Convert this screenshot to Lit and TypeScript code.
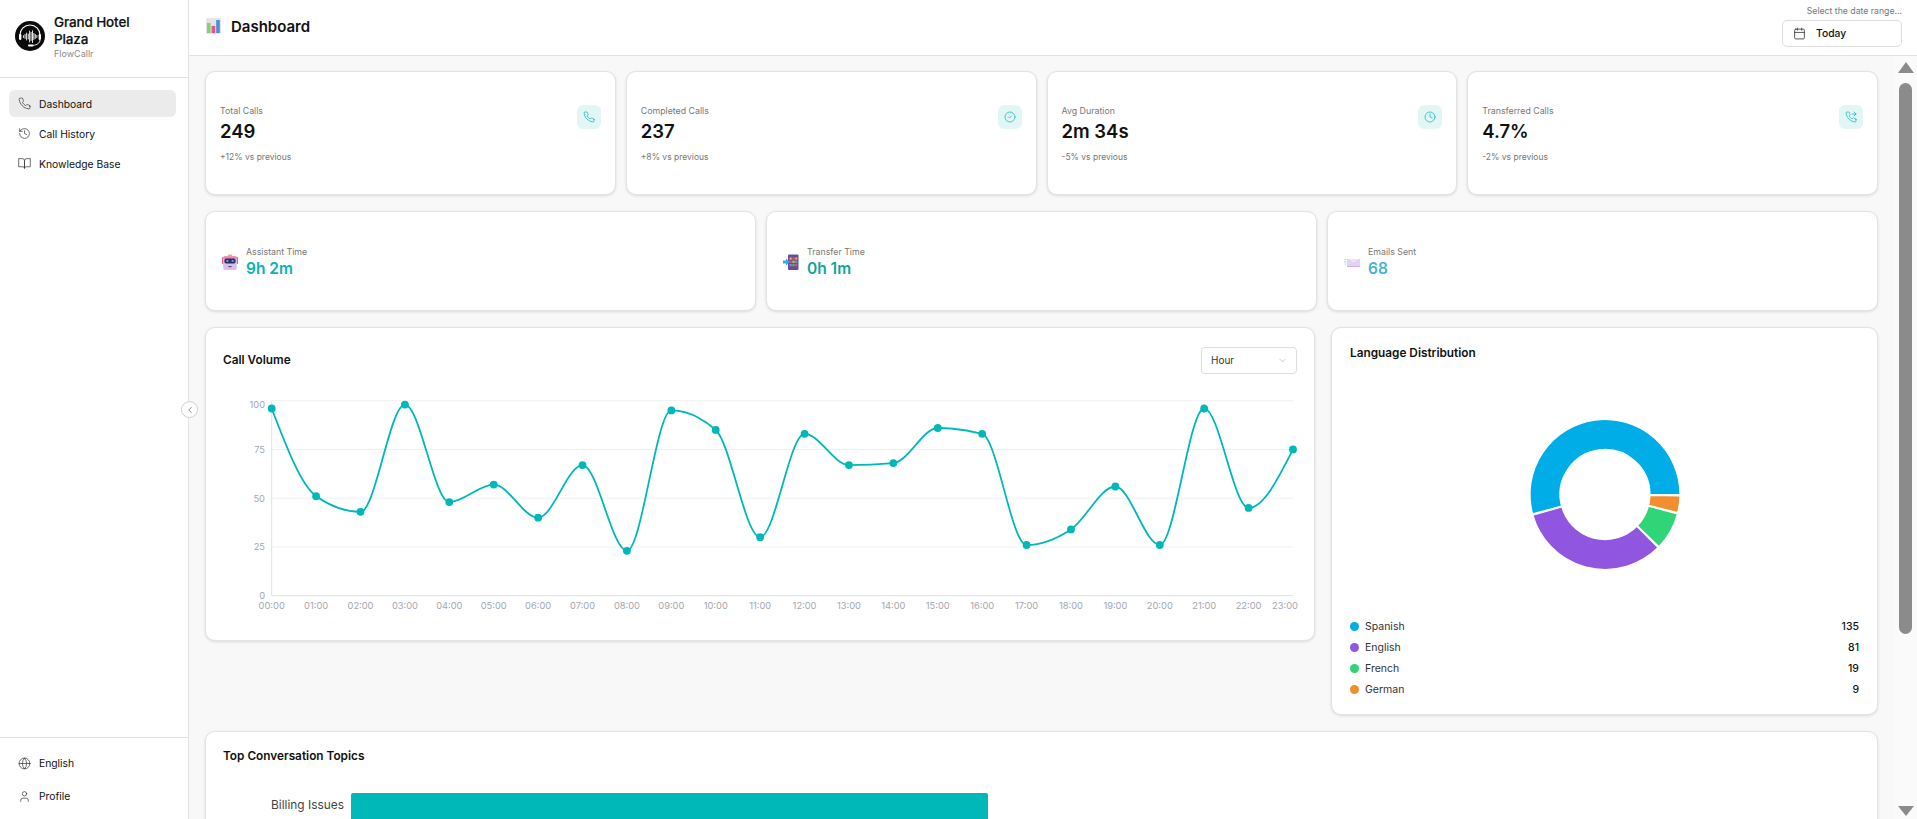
import { LitElement, html, css, svg } from "lit";
import { customElement } from "lit/decorators.js";

const PHONE = "M22 16.92v3a2 2 0 0 1-2.18 2 19.79 19.79 0 0 1-8.63-3.07 19.5 19.5 0 0 1-6-6 19.79 19.79 0 0 1-3.07-8.67A2 2 0 0 1 4.11 2h3a2 2 0 0 1 2 1.72 12.84 12.84 0 0 0 .7 2.81 2 2 0 0 1-.45 2.11L8.09 9.91a16 16 0 0 0 6 6l1.27-1.27a2 2 0 0 1 2.11-.45 12.84 12.84 0 0 0 2.81.7A2 2 0 0 1 22 16.92z";

const ICONS: Record<string, any> = {
  phone: svg`<path d=${PHONE} />`,
  history: svg`<path d="M3 12a9 9 0 1 0 9-9 9.75 9.75 0 0 0-6.74 2.74L3 8"/><path d="M3 3v5h5"/><path d="M12 7v5l4 2"/>`,
  book: svg`<path d="M2 3h6a4 4 0 0 1 4 4v14a3 3 0 0 0-3-3H2z"/><path d="M22 3h-6a4 4 0 0 0-4 4v14a3 3 0 0 1 3-3h7z"/>`,
  globe: svg`<circle cx="12" cy="12" r="10"/><path d="M12 2a14.5 14.5 0 0 0 0 20 14.5 14.5 0 0 0 0-20"/><path d="M2 12h20"/>`,
  user: svg`<path d="M19 21v-2a4 4 0 0 0-4-4H9a4 4 0 0 0-4 4v2"/><circle cx="12" cy="7" r="4"/>`,
  calendar: svg`<path d="M8 2v4"/><path d="M16 2v4"/><rect x="3" y="4" width="18" height="18" rx="2"/><path d="M3 10h18"/>`,
  forwarded: svg`<polyline points="18 2 22 6 18 10"/><line x1="14" y1="6" x2="22" y2="6"/><path d=${PHONE} />`,
  clock: svg`<circle cx="12" cy="12" r="10"/><polyline points="12 6 12 12 16 14"/>`,
  check: svg`<circle cx="12" cy="12" r="10"/><path d="m9 12 2 2 4-4"/>`,
  left: svg`<path d="m15 18-6-6 6-6"/>`,
  down: svg`<path d="m6 9 6 6 6-6"/>`,
};

const icon = (name: string, cls = "") =>
  html`<svg class="ic ${cls}" viewBox="0 0 24 24" fill="none" stroke="currentColor" stroke-linecap="round" stroke-linejoin="round">${ICONS[name]}</svg>`;

const VALUES = [96, 51, 43, 98, 48, 57, 40, 67, 23, 95, 85, 30, 83, 67, 68, 86, 83, 26, 34, 56, 26, 96, 45, 75];
const PX0 = 48.7, PX1 = 1070, PY0 = 205.7, PH = 195;
const px = (i: number) => PX0 + (i * (PX1 - PX0)) / 23;
const py = (v: number) => PY0 - (v * PH) / 100;

function monotonePath(pts: [number, number][]): string {
  const n = pts.length;
  const dx: number[] = [], m: number[] = [], t: number[] = new Array(n).fill(0);
  for (let i = 0; i < n - 1; i++) {
    dx[i] = pts[i + 1][0] - pts[i][0];
    m[i] = (pts[i + 1][1] - pts[i][1]) / dx[i];
  }
  const sign = (v: number) => (v < 0 ? -1 : 1);
  for (let i = 1; i < n - 1; i++) {
    const p = (m[i - 1] * dx[i] + m[i] * dx[i - 1]) / (dx[i - 1] + dx[i]);
    t[i] = (sign(m[i - 1]) + sign(m[i])) * Math.min(Math.abs(m[i - 1]), Math.abs(m[i]), 0.5 * Math.abs(p)) || 0;
  }
  t[0] = (3 * m[0] - t[1]) / 2;
  t[n - 1] = (3 * m[n - 2] - t[n - 2]) / 2;
  let d = `M${pts[0][0]},${pts[0][1]}`;
  for (let i = 0; i < n - 1; i++) {
    const h = dx[i] / 3;
    d += `C${pts[i][0] + h},${pts[i][1] + h * t[i]} ${pts[i + 1][0] - h},${pts[i + 1][1] - h * t[i + 1]} ${pts[i + 1][0]},${pts[i + 1][1]}`;
  }
  return d;
}

function arc(cx: number, cy: number, ro: number, ri: number, a0: number, a1: number): string {
  const p = (r: number, a: number) => {
    const t = (a * Math.PI) / 180;
    return `${(cx + r * Math.cos(t)).toFixed(2)} ${(cy - r * Math.sin(t)).toFixed(2)}`;
  };
  const large = a1 - a0 > 180 ? 1 : 0;
  return `M${p(ro, a0)}A${ro} ${ro} 0 ${large} 0 ${p(ro, a1)}L${p(ri, a1)}A${ri} ${ri} 0 ${large} 1 ${p(ri, a0)}Z`;
}

const LANGS = [
  { name: "Spanish", v: 135, c: "#00ade6", a: [0, 195] },
  { name: "English", v: 81, c: "#9056df", a: [196, 315] },
  { name: "French", v: 19, c: "#2fd576", a: [316, 345] },
  { name: "German", v: 9, c: "#f08e30", a: [346, 359] },
];

const STATS = [
  { label: "Total Calls", value: "249", sub: "+12% vs previous", icon: "phone" },
  { label: "Completed Calls", value: "237", sub: "+8% vs previous", icon: "check" },
  { label: "Avg Duration", value: "2m 34s", sub: "-5% vs previous", icon: "clock" },
  { label: "Transferred Calls", value: "4.7%", sub: "-2% vs previous", icon: "forwarded" },
];

const robot = html`<svg class="emoji" viewBox="0 0 16 17">
  <rect x="6" y="0.5" width="4" height="2" rx="0.6" fill="#f2b544"/>
  <rect x="0" y="3" width="1.6" height="7" rx="0.6" fill="#ef5f95"/>
  <rect x="14.4" y="3" width="1.6" height="7" rx="0.6" fill="#ef5f95"/>
  <rect x="1.2" y="2.2" width="13.6" height="13.8" rx="2.6" fill="#d8bfe8"/>
  <rect x="1.2" y="2.2" width="13.6" height="3" rx="1.4" fill="#ee86ad"/>
  <rect x="2.4" y="4.6" width="11.2" height="5" rx="1.8" fill="#2c2f63"/>
  <rect x="4.4" y="6.2" width="2" height="1.6" fill="#7db6f0"/>
  <rect x="9.6" y="6.2" width="2" height="1.6" fill="#7db6f0"/>
  <rect x="6.4" y="12" width="3.2" height="1.2" fill="#55506f"/>
</svg>`;

const transfer = html`<svg class="emoji" viewBox="0 0 16 17">
  <rect x="5" y="0.5" width="10.5" height="15.5" rx="1" fill="#6a4c9c"/>
  <rect x="6.5" y="3.5" width="2.2" height="2.2" fill="#f0b13c"/>
  <rect x="9.4" y="3.5" width="2.2" height="2.2" fill="#e2574c"/>
  <rect x="12.2" y="3.5" width="2" height="2.2" fill="#f0b13c"/>
  <rect x="6.5" y="6.7" width="2.2" height="2.2" fill="#e2574c"/>
  <rect x="9.4" y="6.7" width="2.2" height="2.2" fill="#f0b13c"/>
  <rect x="12.2" y="6.7" width="2" height="2.2" fill="#4aa6e8"/>
  <rect x="6.5" y="10" width="2.2" height="2.2" fill="#4aa6e8"/>
  <rect x="9.4" y="10" width="2.2" height="2.2" fill="#56b96a"/>
  <rect x="12.2" y="10" width="2" height="2.2" fill="#e2574c"/>
  <path d="M0 6.6h3V4.4l3.6 3.6L3 11.6V9.4H0z" fill="#35a9f2"/>
</svg>`;

const mail = html`<svg class="emoji" viewBox="0 0 16 17">
  <rect x="3" y="5" width="13" height="8" rx="0.6" fill="#e4d3f1"/>
  <path d="M3 5l6.5 4.4L16 5" fill="#efe4f7" stroke="#d6c0ea" stroke-width="0.5"/>
  <rect x="3" y="12" width="13" height="1" fill="#cfb3e6"/>
  <rect x="0.4" y="5.2" width="2" height="0.9" fill="#6fdcf2"/>
  <rect x="0" y="7.4" width="2.4" height="0.9" fill="#6fdcf2"/>
  <rect x="0.8" y="9.6" width="1.6" height="0.9" fill="#6fdcf2"/>
</svg>`;

@customElement("app-root")
export class AppRoot extends LitElement {
  static styles = css`
    :host {
      display: flex;
      height: 100vh;
      overflow: hidden;
      font-family: Inter, "Liberation Sans", sans-serif;
      color: #111;
      background: #fff;
      position: relative;
    }
    * { box-sizing: border-box; }
    .ic { stroke-width: 1.5; width: 13px; height: 13px; flex: none; display: block; }

    .sidebar {
      width: 189px;
      flex: none;
      border-right: 1px solid #e2e2e2;
      display: flex;
      flex-direction: column;
      background: #fff;
    }
    .brand {
      height: 78px;
      flex: none;
      border-bottom: 1px solid #e2e2e2;
      display: flex;
      align-items: center;
      gap: 9px;
      padding: 0 0 5px 15px;
    }
    .logo { width: 30px; height: 30px; flex: none; display: block; }
    .brand-name { font-size: 13.5px; line-height: 17px; font-weight: 500; letter-spacing: -0.01em; width: 92px; -webkit-text-stroke: 0.2px #111; }
    .brand-sub { font-size: 9px; line-height: 11px; color: #8a8a8a; }
    .nav { flex: 1; padding: 12px 12px 0 9px; display: flex; flex-direction: column; gap: 3px; }
    .nav-item {
      height: 27px;
      display: flex;
      align-items: center;
      gap: 8px;
      padding-left: 9px;
      border-radius: 6px;
      font-size: 10.3px;
      font-weight: 400;
      color: #111;
    }
    .nav-item .ic { color: #333; stroke-width: 1.3; }
    .nav-item.active { background: #ebebeb; }
    .foot { height: 82px; border-top: 1px solid #e2e2e2; padding: 11.5px 12px 0 9px; display: flex; flex-direction: column; gap: 6px; flex: none; }
    .collapse {
      position: absolute;
      left: 181px;
      top: 401px;
      width: 17px;
      height: 17px;
      border-radius: 50%;
      background: #fff;
      border: 1px solid #cfcfcf;
      display: flex;
      align-items: center;
      justify-content: center;
      color: #444;
      z-index: 2;
    }
    .collapse .ic { width: 10px; height: 10px; }

    .main { flex: 1; min-width: 0; display: flex; flex-direction: column; }
    .header {
      height: 56px;
      flex: none;
      border-bottom: 1px solid #e2e2e2;
      display: flex;
      justify-content: space-between;
      align-items: center;
      padding: 0 15px 0 17px;
      background: #fff;
    }
    .title { display: flex; align-items: center; gap: 10px; font-size: 15px; font-weight: 600; padding-bottom: 2px; }
    .title svg { width: 15px; height: 16px; display: block; margin-top: -2px; }
    .range { display: flex; flex-direction: column; align-items: flex-end; gap: 3px; padding-bottom: 4px; }
    .range-label { font-size: 8.7px; line-height: 12px; color: #777; }
    .date-btn {
      width: 120px;
      height: 27px;
      border: 1px solid #ddd;
      border-radius: 5px;
      display: flex;
      align-items: center;
      gap: 10px;
      padding-left: 10px;
      font-size: 10.3px;
      font-weight: 500;
      background: #fff;
    }
    .date-btn .ic { color: #333; }

    .body { flex: 1; min-height: 0; display: flex; }
    .content {
      flex: 1;
      min-width: 0;
      overflow-y: auto;
      background: #f8f8f8;
      padding: 15px 15px 16px 16px;
      display: flex;
      flex-direction: column;
      gap: 16px;
    }
    .scrollbar {
      width: 24px;
      flex: none;
      background: #fafafa;
      display: flex;
      flex-direction: column;
      padding: 6px 0 3px 5px;
    }
    .arrow { width: 16px; height: 11px; background: #8b8b8b; flex: none; }
    .arrow.up { clip-path: polygon(50% 0, 100% 100%, 0 100%); }
    .arrow.dn { clip-path: polygon(0 0, 100% 0, 50% 100%); margin-top: auto; height: 10px; }
    .thumb { width: 13px; height: 551px; margin: 10px 0 0 1px; border-radius: 7px; background: #8b8b8b; flex: none; }

    .card {
      background: #fff;
      border: 1px solid #e3e3e3;
      border-radius: 10px;
      box-shadow: 0 1px 3px rgba(0, 0, 0, 0.12);
      flex: none;
    }
    .row4 { display: grid; grid-template-columns: repeat(4, minmax(0, 1fr)); gap: 10px; flex: none; }
    .row3 { display: grid; grid-template-columns: repeat(3, minmax(0, 1fr)); gap: 10px; flex: none; }
    .stat {
      height: 124px;
      padding: 0 14px;
      display: flex;
      align-items: center;
      justify-content: space-between;
    }
    .stat-in { display: flex; justify-content: space-between; align-items: flex-start; width: 100%; padding-top: 1px; }
    .stat-label { font-size: 8.8px; line-height: 13px; color: #777; }
    .stat-value { font-size: 18.5px; line-height: 24px; font-weight: 600; margin-top: 2px; color: #111; }
    .stat-sub { font-size: 8.5px; line-height: 13px; color: #777; margin-top: 8px; }
    .stat-icon {
      width: 24px;
      height: 24px;
      border-radius: 6px;
      background: #e2f6f6;
      color: #14b8bc;
      display: flex;
      align-items: center;
      justify-content: center;
      margin-top: 1px;
    }
    .stat-icon .ic { width: 12px; height: 12px; stroke-width: 1.5; }
    .mini { height: 100px; padding: 1px 15px 0 16px; display: flex; align-items: center; gap: 8px; }
    .emoji { width: 16px; height: 17px; flex: none; display: block; margin-top: 1px; }
    .mini-label { font-size: 8.8px; line-height: 13px; color: #777; }
    .mini-value { font-size: 15.5px; line-height: 20px; font-weight: 600; margin-top: 1px; }

    .row-charts { display: grid; grid-template-columns: minmax(0, 1fr) 547px; gap: 16px; align-items: start; flex: none; }
    .volume { height: 314px; padding: 19px 17px 0; }
    .volume-head { height: 26px; display: flex; justify-content: space-between; align-items: center; }
    .h3 { font-size: 11.8px; line-height: 14px; font-weight: 600; color: #111; }
    .select {
      width: 96px;
      height: 27px;
      border: 1px solid #ddd;
      border-radius: 4px;
      display: flex;
      justify-content: space-between;
      align-items: center;
      padding: 0 8px 0 9px;
      font-size: 10px;
      color: #333;
    }
    .select .ic { width: 11px; height: 11px; color: #aaa; stroke-width: 1.4; }
    .plot { display: block; margin-top: 17px; }
    .plot text { font-family: Inter, "Liberation Sans", sans-serif; font-size: 9.3px; fill: #a3a7b2; }
    .lang { height: 388px; padding: 18px 18px 0; }
    .donut { display: block; margin-top: 16px; }
    .legend { display: flex; flex-direction: column; }
    .legend-row { height: 21px; display: flex; align-items: center; font-size: 10.5px; color: #333; }
    .dot { width: 9px; height: 9px; border-radius: 50%; flex: none; margin-right: 6px; }
    .legend-name { flex: 1; }
    .legend-val { font-weight: 500; color: #111; }

    .topics { flex: none; height: 296px; padding: 17px 17px 0; }
    .bar-row { display: flex; align-items: flex-start; gap: 7px; margin-top: 30px; }
    .bar-label { width: 121px; text-align: right; font-size: 11.9px; line-height: 24px; color: #444; flex: none; }
    .bar-track { flex: 1; }
    .bar { height: 30px; background: #00b8b8; border-radius: 2px 2px 0 0; }
  `;

  private navItem(ic: string, label: string, active = false) {
    return html`<div class="nav-item ${active ? "active" : ""}">${icon(ic)}<span>${label}</span></div>`;
  }

  private renderPlot() {
    const pts = VALUES.map((v, i) => [px(i), py(v)] as [number, number]);
    const d = monotonePath(pts);
    const lastX = (i: number) => (i === 23 ? PX1 - 8 : px(i));
    return html`<svg class="plot" width="1076" height="230">
      ${[100, 75, 50, 25].map(
        (v) => svg`<line x1=${PX0} x2=${PX1} y1=${py(v)} y2=${py(v)} stroke="#eff0f2" stroke-width="1"/>`
      )}
      <line x1=${PX0} x2=${PX0} y1=${py(100)} y2=${py(0)} stroke="#dfe1e6" />
      <line x1=${PX0} x2=${PX1} y1=${py(0)} y2=${py(0)} stroke="#dfe1e6" />
      ${[100, 75, 50, 25, 0].map(
        (v) => svg`<text x="42" y=${(v === 100 ? py(v) + 3.3 : py(v)) + 3.5} text-anchor="end">${v}</text>`
      )}
      ${VALUES.map(
        (_, i) => svg`<text x=${lastX(i)} y="219" text-anchor="middle">${String(i).padStart(2, "0")}:00</text>`
      )}
      <path d=${d} fill="none" stroke="#00b8b8" stroke-width="1.8" />
      ${pts.map((p) => svg`<circle cx=${p[0]} cy=${p[1]} r="3.9" fill="#00b8b8" />`)}
    </svg>`;
  }

  render() {
    return html`
      <aside class="sidebar">
        <div class="brand">
          <svg class="logo" viewBox="0 0 30 30">
            <circle cx="15" cy="15" r="15" fill="#0a0a0a" />
            <path d="M5 17v-3a10 10 0 0 1 20 0v3" fill="none" stroke="#fff" stroke-width="1.1" />
            <rect x="4" y="13" width="2.4" height="6" rx="1.2" fill="#fff" />
            <rect x="23.6" y="13" width="2.4" height="6" rx="1.2" fill="#fff" />
            <path d="M25 19c0 3-3 5-7 5.4" fill="none" stroke="#fff" stroke-width="0.9" />
            <rect x="13" y="23.6" width="5.4" height="1.8" rx="0.9" fill="#fff" />
            ${[[8, 3], [9.6, 5], [11.2, 8], [12.8, 6], [14.2, 12], [15.6, 9], [17, 13], [18.4, 7], [19.8, 5], [21.4, 3]].map(
              ([x, h]) => svg`<rect x=${x} y=${15.5 - h / 2} width="0.9" height=${h} rx="0.4" fill="#fff" />`
            )}
          </svg>
          <div>
            <div class="brand-name">Grand Hotel Plaza</div>
            <div class="brand-sub">FlowCallr</div>
          </div>
        </div>
        <nav class="nav">
          ${this.navItem("phone", "Dashboard", true)}
          ${this.navItem("history", "Call History")}
          ${this.navItem("book", "Knowledge Base")}
        </nav>
        <div class="foot">
          ${this.navItem("globe", "English")}
          ${this.navItem("user", "Profile")}
        </div>
      </aside>
      <div class="collapse">${icon("left")}</div>
      <div class="main">
        <header class="header">
          <div class="title">
            <svg viewBox="0 0 15 16">
              <rect width="15" height="16" rx="1" fill="#e6e4e8" />
              <rect x="1" y="5" width="3.6" height="10" fill="#7ed56f" />
              <rect x="5.6" y="8" width="3.6" height="7" fill="#ee4d86" />
              <rect x="10.2" y="2" width="3.6" height="13" fill="#4a90d9" />
            </svg>
            <span>Dashboard</span>
          </div>
          <div class="range">
            <div class="range-label">Select the date range...</div>
            <div class="date-btn">${icon("calendar")}<span>Today</span></div>
          </div>
        </header>
        <div class="body">
          <div class="content">
            <div class="row4">
              ${STATS.map(
                (s) => html`<div class="card stat">
                  <div class="stat-in">
                    <div>
                      <div class="stat-label">${s.label}</div>
                      <div class="stat-value">${s.value}</div>
                      <div class="stat-sub">${s.sub}</div>
                    </div>
                    <div class="stat-icon">${icon(s.icon)}</div>
                  </div>
                </div>`
              )}
            </div>
            <div class="row3">
              <div class="card mini">
                ${robot}
                <div><div class="mini-label">Assistant Time</div><div class="mini-value" style="color:#0bb0b8">9h 2m</div></div>
              </div>
              <div class="card mini">
                ${transfer}
                <div><div class="mini-label">Transfer Time</div><div class="mini-value" style="color:#10a59c">0h 1m</div></div>
              </div>
              <div class="card mini">
                ${mail}
                <div><div class="mini-label">Emails Sent</div><div class="mini-value" style="color:#45b4cc">68</div></div>
              </div>
            </div>
            <div class="row-charts">
              <div class="card volume">
                <div class="volume-head">
                  <div class="h3">Call Volume</div>
                  <div class="select"><span>Hour</span>${icon("down")}</div>
                </div>
                ${this.renderPlot()}
              </div>
              <div class="card lang">
                <div class="h3">Language Distribution</div>
                <svg class="donut" width="509" height="240">
                  ${LANGS.map(
                    (l) => svg`<path d=${arc(255, 118.5, 75, 45, l.a[0], l.a[1])} fill=${l.c} stroke="#fff" stroke-width="1.2" />`
                  )}
                </svg>
                <div class="legend">
                  ${LANGS.map(
                    (l) => html`<div class="legend-row">
                      <span class="dot" style="background:${l.c}"></span>
                      <span class="legend-name">${l.name}</span>
                      <span class="legend-val">${l.v}</span>
                    </div>`
                  )}
                </div>
              </div>
            </div>
            <div class="card topics">
              <div class="h3">Top Conversation Topics</div>
              <div class="bar-row">
                <div class="bar-label">Billing Issues</div>
                <div class="bar-track"><div class="bar" style="width:${(637 / 1509) * 100}%"></div></div>
              </div>
            </div>
          </div>
          <div class="scrollbar" aria-hidden="true">
            <div class="arrow up"></div>
            <div class="thumb"></div>
            <div class="arrow dn"></div>
          </div>
        </div>
      </div>
    `;
  }
}
